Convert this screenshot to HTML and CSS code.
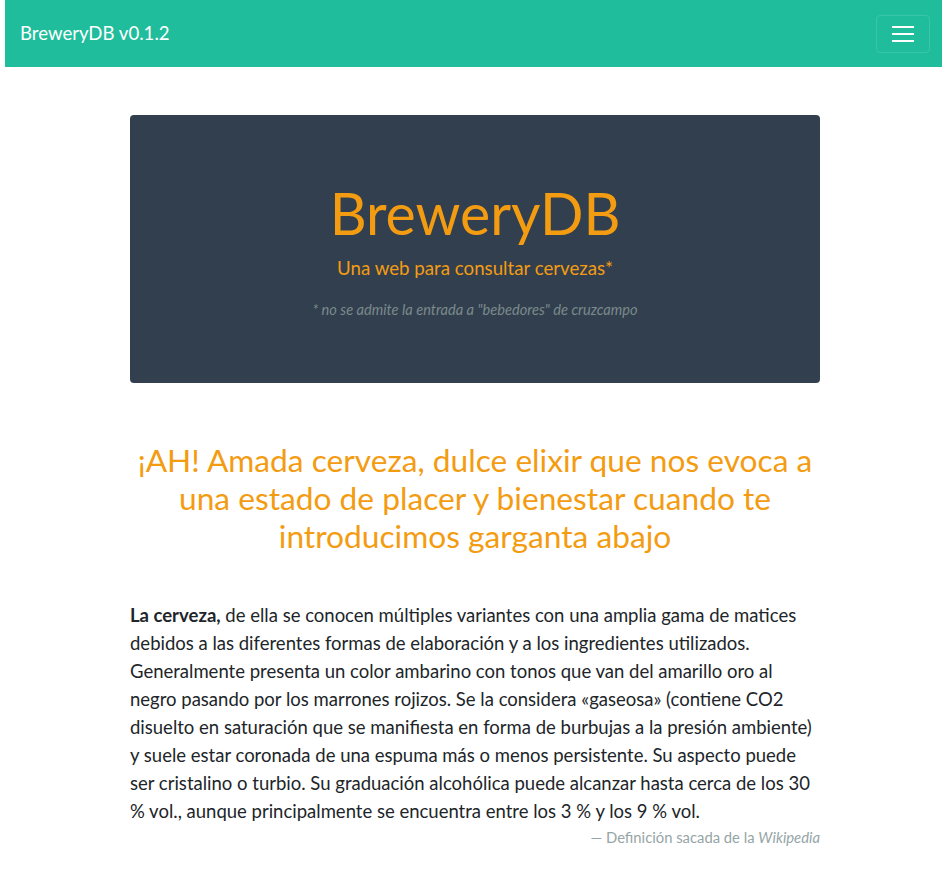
FILE: index.html
```html
<!DOCTYPE html>
<html lang="es">
<head>
<meta charset="utf-8">
<title>BreweryDB</title>
<link rel="stylesheet" href="styles.css">
</head>
<body>
<nav class="navbar">
  <a class="brand" href="#">BreweryDB v0.1.2</a>
  <button class="toggler" type="button" aria-label="Menu">
    <svg width="22" height="18" viewBox="0 0 22 18"><path d="M0 2h22M0 9h22M0 16h22" stroke="#fff" stroke-width="2" fill="none"/></svg>
  </button>
</nav>
<main class="container">
  <section class="jumbo">
    <h1 class="jumbo-title">BreweryDB</h1>
    <p class="jumbo-lead">Una web para consultar cervezas*</p>
    <p class="jumbo-note">* no se admite la entrada a "bebedores" de cruzcampo</p>
  </section>
  <h2 class="quote-title">¡AH! Amada cerveza, dulce elixir que nos evoca a una estado de placer y bienestar cuando te introducimos garganta abajo</h2>
  <blockquote class="quote">
    <p><strong>La cerveza,</strong> de ella se conocen múltiples variantes con una amplia gama de matices debidos a las diferentes formas de elaboración y a los ingredientes utilizados. Generalmente presenta un color ambarino con tonos que van del amarillo oro al negro pasando por los marrones rojizos. Se la considera «gaseosa» (contiene CO2 disuelto en saturación que se manifiesta en forma de burbujas a la presión ambiente) y suele estar coronada de una espuma más o menos persistente. Su aspecto puede ser cristalino o turbio. Su graduación alcohólica puede alcanzar hasta cerca de los 30 % vol., aunque principalmente se encuentra entre los 3 % y los 9 % vol.</p>
    <footer class="quote-footer">— Definición sacada de la <cite>Wikipedia</cite></footer>
  </blockquote>
</main>
</body>
</html>
```
FILE: styles.css
```css
* { box-sizing: border-box; }
html, body { margin: 0; padding: 0; }
body {
  font-family: Lato, "Open Sans", "Liberation Sans", sans-serif;
  color: #212529;
  background: #fff;
}
.navbar {
  margin: 0 6px 0 5px;
  height: 67px;
  background: #1fbd9b;
  display: flex;
  align-items: center;
  justify-content: space-between;
  padding: 0 12px 0 15px;
}
.brand {
  color: #fff;
  text-decoration: none;
  font-size: 18.6px;
  line-height: 1;
}
.toggler {
  width: 54px;
  height: 38px;
  background: transparent;
  border: 1px solid rgba(255,255,255,0.12);
  border-radius: 4px;
  display: flex;
  align-items: center;
  justify-content: center;
  padding: 0;
}
.container {
  width: 690px;
  margin: 0 0 0 calc(50% - 344px);
}
.jumbo {
  margin-top: 48px;
  height: 268px;
  background: #323f4f;
  border-radius: 4px;
  padding-top: 65px;
  text-align: center;
}
.jumbo-title {
  margin: 0;
  font-size: 57.2px;
  font-weight: 400;
  line-height: 67px;
  color: #f39c12;
}
.jumbo-lead {
  margin: 6px 0 0;
  font-size: 18.7px;
  line-height: 30px;
  color: #f39c12;
}
.jumbo-note {
  margin: 16px 0 0;
  font-size: 14.6px;
  line-height: 21px;
  font-style: italic;
  color: #7b8a8b;
}
.quote-title {
  margin: 58px 0 0;
  font-size: 31.7px;
  font-weight: 400;
  line-height: 38px;
  text-align: center;
  color: #f39c12;
}
.quote {
  margin: 46px 0 0;
}
.quote p {
  margin: 0;
  font-size: 18.5px;
  line-height: 28px;
  color: #212529;
}
.quote strong { font-weight: 700; }
.quote-footer {
  text-align: right;
  font-size: 14.8px;
  line-height: 24px;
  color: #95a5a6;
}
.quote-footer cite { font-style: italic; }
```
